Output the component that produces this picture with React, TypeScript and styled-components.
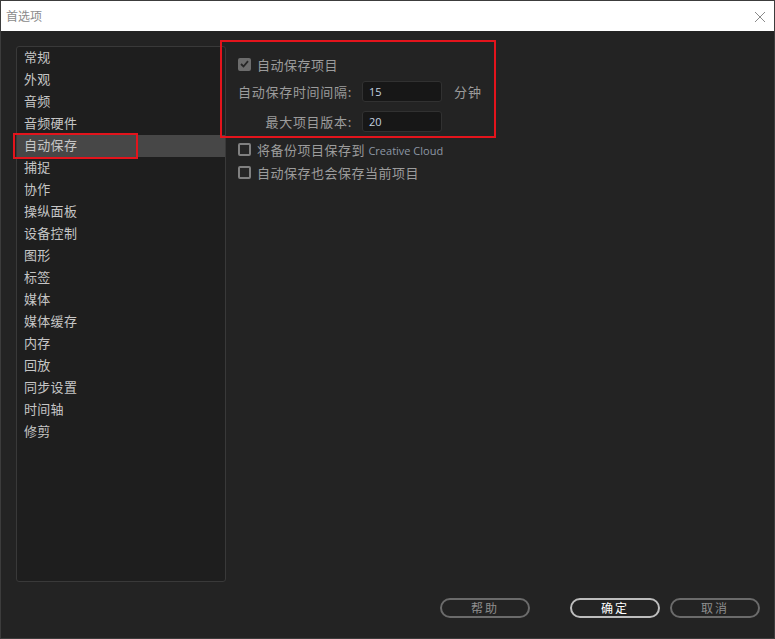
import React, { FC } from "react";
import styled, { createGlobalStyle, css } from "styled-components";

const GlobalStyle = createGlobalStyle`
  html, body {
    margin: 0;
    padding: 0;
    background: #232323;
  }
  * {
    box-sizing: border-box;
  }
`;

const font = `"Noto Sans CJK SC", "Noto Sans", sans-serif`;

const categories = [
  "常规",
  "外观",
  "音频",
  "音频硬件",
  "自动保存",
  "捕捉",
  "协作",
  "操纵面板",
  "设备控制",
  "图形",
  "标签",
  "媒体",
  "媒体缓存",
  "内存",
  "回放",
  "同步设置",
  "时间轴",
  "修剪",
];

const Window = styled.div`
  width: 775px;
  height: 639px;
  border: 1px solid #3c3c3c;
  background: #232323;
  display: flex;
  flex-direction: column;
  font-family: ${font};
  overflow: hidden;
`;

const TitleBar = styled.div`
  height: 30px;
  flex: none;
  background: #ffffff;
  display: flex;
  align-items: center;
  justify-content: space-between;
  padding: 0 8px 0 5px;
`;

const Title = styled.span`
  font-size: 12px;
  color: #8a8a8a;
  line-height: 1;
`;

const CloseIcon = styled.svg`
  width: 12px;
  height: 12px;
  margin-top: 1px;
`;

const Body = styled.div`
  flex: 1;
  display: flex;
  padding: 15px 0 0 15px;
`;

const List = styled.ul`
  width: 210px;
  height: 536px;
  flex: none;
  margin: 0;
  padding: 0;
  list-style: none;
  background: #1e1e1e;
  border: 1px solid #393939;
  border-radius: 3px;
`;

const Item = styled.li<{ $active?: boolean }>`
  position: relative;
  height: 22px;
  line-height: 20px;
  padding-left: 7px;
  font-size: 13px;
  letter-spacing: 0.3px;
  color: #c6c6c6;
  ${(p) =>
    p.$active &&
    css`
      background: #474747;
    `}
`;

const Mark = styled.span<{ $top: number; $left: number; $w: number; $h: number }>`
  position: absolute;
  top: ${(p) => p.$top}px;
  left: ${(p) => p.$left}px;
  width: ${(p) => p.$w}px;
  height: ${(p) => p.$h}px;
  border: 2px solid #e3141c;
  pointer-events: none;
`;

const Panel = styled.div`
  position: relative;
  flex: 1;
  padding: 7px 0 0 12px;
  display: flex;
  flex-direction: column;
  align-items: flex-start;
`;

const CheckRow = styled.label<{ $gap?: number }>`
  display: flex;
  align-items: center;
  gap: 6px;
  height: 22px;
  margin-top: ${(p) => p.$gap ?? 0}px;
  font-size: 13px;
  letter-spacing: 0.5px;
  color: #9c9c9c;
`;

const Box = styled.span<{ $checked?: boolean }>`
  width: 13px;
  height: 13px;
  border-radius: 2px;
  border: 2px solid ${(p) => (p.$checked ? "#6c6c6c" : "#808080")};
  background: ${(p) => (p.$checked ? "#6c6c6c" : "#262626")};
  display: flex;
  align-items: center;
  justify-content: center;
`;

const Cloud = styled.span`
  font-family: "Open Sans", "Liberation Sans", sans-serif;
  font-size: 11px;
  letter-spacing: 0;
  color: #8d97a3;
`;

const FieldGrid = styled.div`
  display: grid;
  grid-template-columns: 114px 80px auto;
  column-gap: 10px;
  row-gap: 9px;
  margin-top: 6px;
  align-items: center;
`;

const FieldLabel = styled.span`
  text-align: right;
  font-size: 13px;
  letter-spacing: 0.7px;
  color: #9c9c9c;
  white-space: nowrap;
`;

const Input = styled.div`
  height: 21px;
  background: #171717;
  border: 1px solid #313131;
  border-radius: 3px;
  padding-left: 6px;
  font-family: "Open Sans", "Liberation Sans", sans-serif;
  font-size: 11px;
  line-height: 19px;
  color: #c4d2e0;
`;

const Unit = styled.span`
  font-size: 13px;
  letter-spacing: 1px;
  color: #9c9c9c;
  padding-left: 2px;
`;

const Footer = styled.div`
  height: 55px;
  flex: none;
  display: flex;
  align-items: flex-start;
  padding: 15px 0 0 439px;
`;

const Button = styled.button<{ $primary?: boolean; $gap?: number }>`
  width: 90px;
  height: 20px;
  margin-left: ${(p) => p.$gap ?? 0}px;
  border-radius: 10px;
  background: transparent;
  border: 2px solid ${(p) => (p.$primary ? "#bdbdbd" : "#6b6b6b")};
  color: ${(p) => (p.$primary ? "#ffffff" : "#8e8e8e")};
  font-family: ${font};
  font-size: 12px;
  letter-spacing: 2px;
  line-height: 1;
  padding: 0;
`;

const Check: FC = () => (
  <svg width="9" height="8" viewBox="0 0 9 8">
    <path d="M1 4 L3.5 6.5 L8 1.2" fill="none" stroke="#262626" strokeWidth="1.8" />
  </svg>
);

export default function App() {
  return (
    <>
      <GlobalStyle />
      <Window>
        <TitleBar>
          <Title>首选项</Title>
          <CloseIcon viewBox="0 0 12 12">
            <path d="M1 1 L11 11 M11 1 L1 11" stroke="#8a8a8a" strokeWidth="1" />
          </CloseIcon>
        </TitleBar>
        <Body>
          <List>
            {categories.map((c) => (
              <Item key={c} $active={c === "自动保存"}>
                {c}
                {c === "自动保存" && <Mark $top={-2} $left={-4} $w={125} $h={26} />}
              </Item>
            ))}
          </List>
          <Panel>
            <Mark $top={-6} $left={-6} $w={276} $h={98} />
            <CheckRow>
              <Box $checked>
                <Check />
              </Box>
              自动保存项目
            </CheckRow>
            <FieldGrid>
              <FieldLabel>自动保存时间间隔:</FieldLabel>
              <Input>15</Input>
              <Unit>分钟</Unit>
              <FieldLabel>最大项目版本:</FieldLabel>
              <Input>20</Input>
              <span />
            </FieldGrid>
            <CheckRow $gap={6}>
              <Box />
              <span>
                将备份项目保存到 <Cloud>Creative Cloud</Cloud>
              </span>
            </CheckRow>
            <CheckRow $gap={1}>
              <Box />
              自动保存也会保存当前项目
            </CheckRow>
          </Panel>
        </Body>
        <Footer>
          <Button>帮助</Button>
          <Button $primary $gap={40}>确定</Button>
          <Button $gap={10}>取消</Button>
        </Footer>
      </Window>
    </>
  );
}
